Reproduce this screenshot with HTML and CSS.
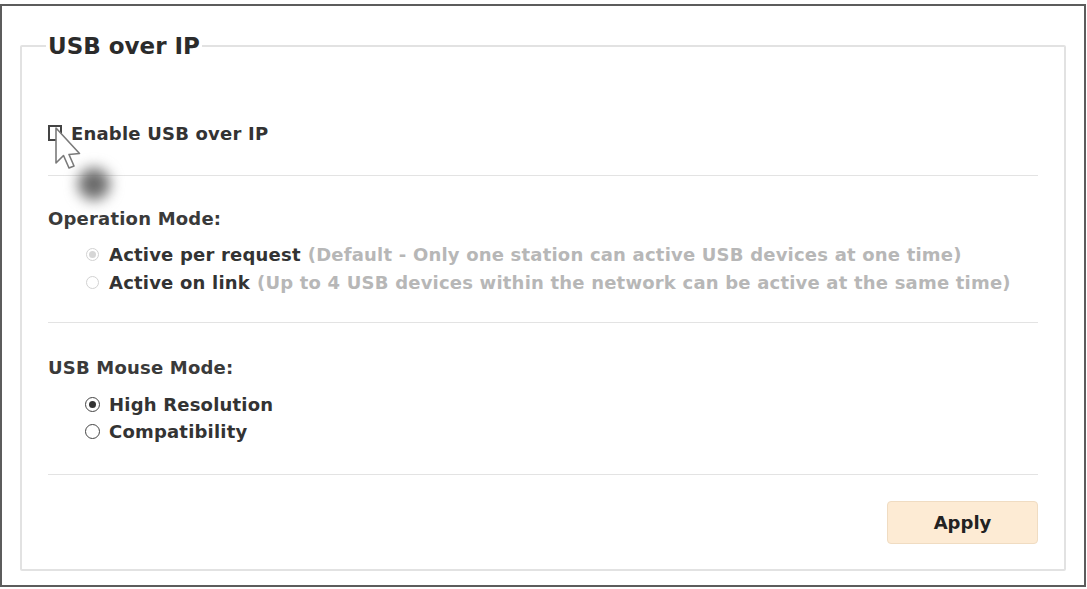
FILE: index.html
```html
<!DOCTYPE html>
<html lang="en">
<head>
  <meta charset="UTF-8">
  <meta name="viewport" content="width=device-width, initial-scale=1.0">
  <title>USB over IP</title>
  <link rel="stylesheet" href="styles.css">
</head>
<body>

  <div class="frame">
    <fieldset class="panel">
      <legend>USB over IP</legend>

      <!-- Activar USB sobre IP -->
      <div class="section first">
        <label class="check-row">
          <input type="checkbox" class="check" id="usbEnable">
          <span>Enable USB over IP</span>
        </label>
      </div>

      <!-- Modo de operacion (deshabilitado mientras no se active) -->
      <div class="section">
        <p class="section-title">Operation Mode:</p>
        <label class="radio-row disabled">
          <input type="radio" name="opMode" class="radio" checked disabled>
          <strong>Active per request</strong>
          <span class="hint">(Default - Only one station can active USB devices at one time)</span>
        </label>
        <label class="radio-row disabled">
          <input type="radio" name="opMode" class="radio" disabled>
          <strong>Active on link</strong>
          <span class="hint">(Up to 4 USB devices within the network can be active at the same time)</span>
        </label>
      </div>

      <!-- Modo del raton -->
      <div class="section mouse">
        <p class="section-title">USB Mouse Mode:</p>
        <label class="radio-row">
          <input type="radio" name="mouseMode" class="radio" checked>
          <strong>High Resolution</strong>
        </label>
        <label class="radio-row">
          <input type="radio" name="mouseMode" class="radio">
          <strong>Compatibility</strong>
        </label>
      </div>

      <div class="actions">
        <button class="apply">Apply</button>
      </div>
    </fieldset>

    <!-- puntero del raton sobre la casilla -->
    <div class="cursor-shadow"></div>
    <svg class="cursor" width="28" height="44" viewBox="0 0 28 44">
      <path d="M2 1 L2 36 L9.5 28.5 L15 41 L20 39 L15 27.5 L25.5 26.5 Z" fill="#fff" stroke="#7a7a7a" stroke-width="1.6" stroke-linejoin="round"/>
    </svg>
  </div>

</body>
</html>
```

FILE: styles.css
```css
html, body {
  margin: 0;
  padding: 0;
  background: #fff;
}
body {
  font-family: "DejaVu Sans", Verdana, sans-serif;
  color: #333;
  letter-spacing: 0.2px;
  width: 1087px;
  height: 589px;
  overflow: hidden;
}
.frame {
  position: relative;
  box-sizing: border-box;
  height: 583px;
  margin: 4px 1px 0 0;
  border: 2px solid #5c5c5c;
  padding: 27px 18px 14px 18px;
}
.panel {
  box-sizing: border-box;
  height: 100%;
  margin: 0;
  padding: 0 26px 0 26px;
  border: 2px solid #e2e2e2;
  border-radius: 2px;
}
.panel legend {
  font-size: 23px;
  line-height: 26px;
  font-weight: bold;
  letter-spacing: 0;
  color: #2b2b2b;
  padding: 0 2px;
  margin-left: -2px;
}
.section {
  border-bottom: 1px solid #e3e3e3;
  padding: 32px 0 26px;
}
.section.first {
  padding: 63px 0 31px;
}
.section.mouse {
  padding: 34px 0 29px;
}
.section-title {
  margin: 0 0 10px;
  font-size: 18px;
  line-height: 22px;
  font-weight: bold;
  color: #3a3a3a;
}
.mouse .section-title {
  margin-bottom: 12px;
}
.check-row {
  display: flex;
  align-items: center;
  height: 22px;
  font-size: 18px;
  font-weight: bold;
  color: #333;
}
.check {
  appearance: none;
  box-sizing: border-box;
  width: 14px;
  height: 16px;
  margin: 0 9px 0 0;
  border: 2px solid #444;
  background: #fff;
}
.radio-row {
  display: flex;
  align-items: center;
  gap: 7px;
  height: 28px;
  padding-left: 38px;
  font-size: 18px;
  color: #333;
}
.mouse .radio-row {
  height: 27px;
  padding-left: 37px;
}
.radio-row strong {
  font-weight: bold;
}
.radio {
  appearance: none;
  box-sizing: border-box;
  width: 13px;
  height: 13px;
  margin: 0 3px 0 0;
  border: 1px solid #555;
  border-radius: 50%;
  background: #fff;
  display: grid;
  place-content: center;
}
.mouse .radio {
  width: 15px;
  height: 15px;
  margin-right: 2px;
  border: 1.5px solid #444;
}
.radio:checked::after {
  content: "";
  width: 7px;
  height: 7px;
  border-radius: 50%;
  background: #333;
}
.radio-row.disabled .radio {
  border-color: #d2d2d2;
}
.radio-row.disabled .radio:checked::after {
  background: #d6d6d6;
}
.hint {
  font-weight: bold;
  color: #b7b7b7;
}
.actions {
  display: flex;
  justify-content: flex-end;
  padding-top: 26px;
}
.apply {
  width: 151px;
  height: 43px;
  font-family: "DejaVu Sans", Verdana, sans-serif;
  font-size: 18px;
  font-weight: bold;
  color: #222;
  background: #fdebd4;
  border: 1px solid #f0dcc2;
  border-radius: 4px;
  cursor: pointer;
}
.cursor {
  position: absolute;
  left: 52px;
  top: 121px;
}
.cursor-shadow {
  position: absolute;
  left: 76px;
  top: 162px;
  width: 32px;
  height: 32px;
  border-radius: 50%;
  background: #6a6a6a;
  filter: blur(7px);
}
```
